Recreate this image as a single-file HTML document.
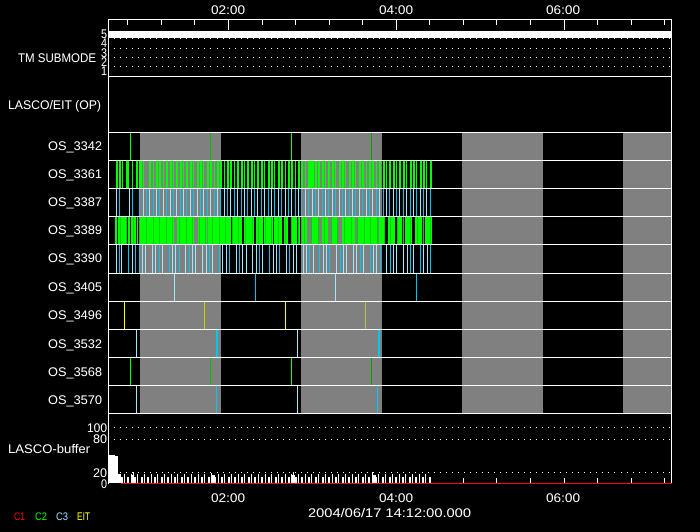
<!DOCTYPE html>
<html><head><meta charset="utf-8"><style>
html,body{margin:0;padding:0;background:#000;width:700px;height:532px;overflow:hidden}
svg{display:block}
text{font-family:"Liberation Sans",sans-serif;font-size:12.5px;fill:#fff;text-rendering:geometricPrecision}
</style></head><body>
<svg id="s" width="700" height="532" viewBox="0 0 700 532" xmlns="http://www.w3.org/2000/svg">
<rect width="700" height="532" fill="#000"/>
<g id="g" shape-rendering="crispEdges"></g>
<text x="211" y="14" textLength="34" lengthAdjust="spacingAndGlyphs">02:00</text>
<text x="379" y="14" textLength="34" lengthAdjust="spacingAndGlyphs">04:00</text>
<text x="546" y="14" textLength="34" lengthAdjust="spacingAndGlyphs">06:00</text>
<text x="101" y="38" textLength="6" lengthAdjust="spacingAndGlyphs">5</text>
<text x="101" y="47" textLength="6" lengthAdjust="spacingAndGlyphs">4</text>
<text x="101" y="57" textLength="6" lengthAdjust="spacingAndGlyphs">3</text>
<text x="101" y="66" textLength="6" lengthAdjust="spacingAndGlyphs">2</text>
<text x="101" y="75" textLength="6" lengthAdjust="spacingAndGlyphs">1</text>
<text x="18" y="62" textLength="78" lengthAdjust="spacingAndGlyphs">TM SUBMODE</text>
<text x="8" y="109" textLength="93" lengthAdjust="spacingAndGlyphs">LASCO/EIT (OP)</text>
<text x="48" y="150" textLength="54" lengthAdjust="spacingAndGlyphs">OS_3342</text>
<text x="48" y="178" textLength="54" lengthAdjust="spacingAndGlyphs">OS_3361</text>
<text x="48" y="206" textLength="54" lengthAdjust="spacingAndGlyphs">OS_3387</text>
<text x="48" y="234" textLength="54" lengthAdjust="spacingAndGlyphs">OS_3389</text>
<text x="48" y="262" textLength="54" lengthAdjust="spacingAndGlyphs">OS_3390</text>
<text x="48" y="291" textLength="54" lengthAdjust="spacingAndGlyphs">OS_3405</text>
<text x="48" y="319" textLength="54" lengthAdjust="spacingAndGlyphs">OS_3496</text>
<text x="48" y="348" textLength="54" lengthAdjust="spacingAndGlyphs">OS_3532</text>
<text x="48" y="376" textLength="54" lengthAdjust="spacingAndGlyphs">OS_3568</text>
<text x="48" y="404" textLength="54" lengthAdjust="spacingAndGlyphs">OS_3570</text>
<text x="87" y="432" textLength="20" lengthAdjust="spacingAndGlyphs">100</text>
<text x="93" y="443" textLength="14" lengthAdjust="spacingAndGlyphs">80</text>
<text x="8" y="453" textLength="82" lengthAdjust="spacingAndGlyphs">LASCO-buffer</text>
<text x="93" y="477" textLength="14" lengthAdjust="spacingAndGlyphs">20</text>
<text x="101" y="488" textLength="6" lengthAdjust="spacingAndGlyphs">0</text>
<text x="211" y="502" textLength="34" lengthAdjust="spacingAndGlyphs">02:00</text>
<text x="379" y="502" textLength="34" lengthAdjust="spacingAndGlyphs">04:00</text>
<text x="546" y="502" textLength="34" lengthAdjust="spacingAndGlyphs">06:00</text>
<text x="308" y="517" textLength="163" lengthAdjust="spacingAndGlyphs">2004/06/17  14:12:00.000</text>
<text x="14" y="520" textLength="11" lengthAdjust="spacingAndGlyphs" style="font-size:11px;fill:#f00">C1</text>
<text x="35" y="520" textLength="12" lengthAdjust="spacingAndGlyphs" style="font-size:11px;fill:#0f0">C2</text>
<text x="56" y="520" textLength="12" lengthAdjust="spacingAndGlyphs" style="font-size:11px;fill:#a0e0ff">C3</text>
<text x="77" y="520" textLength="13" lengthAdjust="spacingAndGlyphs" style="font-size:11px;fill:#ff0">EIT</text>
</svg>
<script>
var o=[];
function R(x,y,w,h,c){o.push('<rect x="'+x+'" y="'+y+'" width="'+w+'" height="'+h+'" fill="'+c+'"/>');}
var W='#fff',G='#0f0',L='#a0e8ff',C='#00c8f0',Y='#ff0';
var tops=[132,160,188,216,244,273,301,329,357,385,413];
// grey bands
[[140,81],[301,81],[462,81],[623,48]].forEach(function(b){R(b[0],133,b[1],280,'#808080');});
// OS_3361
for(var k=0;k<94;k++){var x=Math.floor(116+k*3.38);if(k==4||k==9)continue;R(x,161,k%3==2?1:2,27,G);}
R(116,161,2,27,G);R(119,161,2,27,G);R(126,161,3,27,G);R(139,161,3,27,G);R(310,161,2,27,G);R(315,161,2,27,G);
// OS_3387
for(k=0;k<94;k++){x=Math.floor(116+k*3.38);if(k==2||k==3||k==6)continue;R(x,189,1,27,k%2?C:L);}
// OS_3389
[[115,2],[118,9],[128,2],[131,5],[137,1],[140,34],[177,17],[198,9],[208,10],[218,6],[224,7],[233,9],[244,10],[256,7],[264,9],[274,6],[280,2],[284,4],[291,6],[298,2],[302,5],[311,7],[322,6],[331,7],[342,13],[357,20],[379,6],[388,7],[398,4],[405,7],[415,7],[425,7]].forEach(function(r){R(r[0],217,r[1],27,G);});
for(k=0;k<48;k++){x=Math.floor(120+k*6.6);if(x<431)R(x,217,1,27,'#00d000');}
// OS_3390
[116,119,121,128,132,135].forEach(function(x,i){R(x,245,1,28,i%2?C:L);});
for(k=0;k<88;k++){if(k%5==3)continue;x=Math.floor(139+k*3.35);R(x,245,1,28,k%3==0?C:L);}
// sparse
function S(t,a){a.forEach(function(b){R(b[0],t+1,b[2]||1,tops[tops.indexOf(t)+1]-t-1,b[1]);});}
S(132,[[130,G],[210,'#00c000'],[291,G],[371,'#00a000']]);
S(273,[[174,L],[255,C],[335,L],[416,C]]);
S(301,[[124,Y],[204,'#d0d000'],[285,Y],[365,'#c0c040']]);
S(329,[[136,L],[216,C,2],[297,L],[378,C,2]]);
S(357,[[130,G],[210,'#00c000'],[291,G],[371,'#00a000']]);
S(385,[[136,L],[216,C],[297,L],[377,C]]);
// horizontal lines
tops.forEach(function(y){R(108,y,564,1,W);});
R(108,76,564,1,W);
R(108,19,564,1,W);
R(108,19,1,465,W);
R(671,19,1,465,W);
// white band
R(109,31,562,7,W);
// dotted rows
[38,48,57,66,427,439,472].forEach(function(y){for(var x=114;x<671;x+=6.03)R(Math.round(x),y,1,1,W);});
// ticks
for(k=-3;k<=13;k++){x=Math.round(228+k*33.55);if(x<=108||x>=671)continue;var mj=(k%5==0);R(x,20,1,mj?10:5,W);R(x,478,1,5,W);}
// buffer
R(109,455,6,28,W);R(115,456,3,27,W);R(118,474,3,9,W);
k=0;for(x=121;x<431;x+=3.35){k++;var big=k%2==0;R(Math.floor(x),483-(big?9:6),big?1:2,big?9:6,W);}
[[131,3,8],[133,1,11],[212,3,8],[211,1,10],[292,3,8],[293,1,11],[372,4,8],[372,1,11]].forEach(function(b){R(b[0],483-b[2],b[1],b[2],W);});
R(121,483,551,1,'#f00');
document.getElementById('g').innerHTML=o.join('');
</script>
</body></html>
